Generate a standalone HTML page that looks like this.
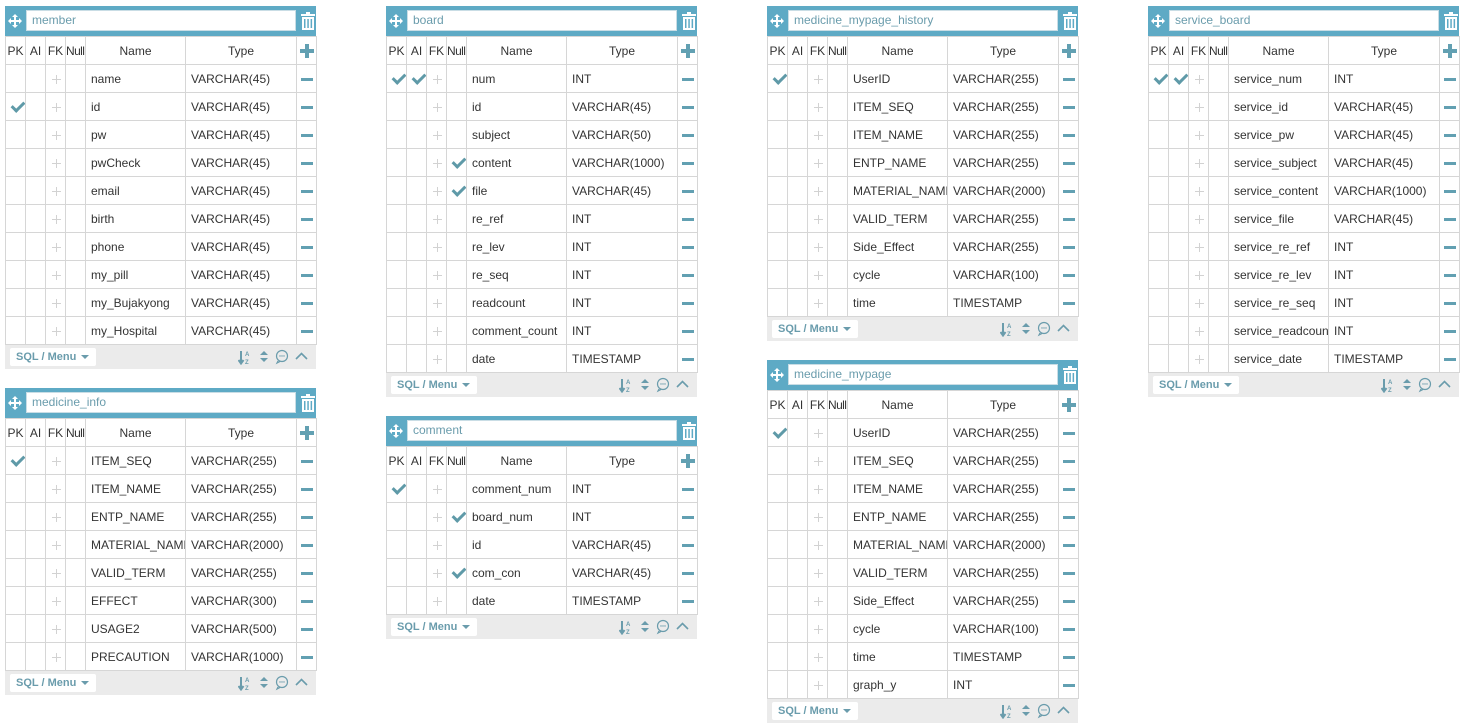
<!DOCTYPE html>
<html><head><meta charset="utf-8"><style>
*{box-sizing:border-box}
body{margin:0;width:1467px;height:727px;background:#fff;font-family:"Liberation Sans",sans-serif;font-size:12px;color:#333;position:relative;overflow:hidden}
.card{position:absolute;width:311px}
.hd{height:30px;background:#5eaac5;position:relative}
.hd .mvw{position:absolute;left:3px;top:8px;width:14px;height:14px}
.hd .nm{position:absolute;left:21px;top:4px;width:270px;height:21px;background:#fff;border:1px solid #c9dde5;color:#6a9cac;font-size:12px;line-height:19px;padding-left:5px}
.hd .tr{position:absolute;right:1px;top:6px;width:14px;height:18px}
table{border-collapse:collapse;table-layout:fixed;width:311px}
td{border:1px solid #d6d6d6;height:28px;padding:0;position:relative;white-space:nowrap;overflow:hidden}
tr.h td{text-align:center;font-size:12px;color:#333}
tr.h td.s{text-align:left;padding-left:0;letter-spacing:-0.6px;overflow:visible}
td.n,td.t{padding-left:5px}
td.f::before,td.f::after{content:"";position:absolute;background:#d2d2d2;left:50%;top:50%}
td.f::before{width:9px;height:1px;margin-left:-4px;margin-top:0}
td.f::after{width:1px;height:9px;margin-left:0;margin-top:-4px}
td.c::before{content:"";position:absolute;width:5px;height:10px;border-right:3px solid #5f9aa8;border-bottom:3px solid #5f9aa8;transform:rotate(45deg);left:8px;top:6px}
td.m::before{content:"";position:absolute;left:4px;top:13px;width:12px;height:3px;background:#62a0b2}
td.p::before,td.p::after{content:"";position:absolute;background:#62a0b2}
td.p::before{left:3px;top:12px;width:14px;height:4px}
td.p::after{left:8px;top:7px;width:4px;height:14px}
.ft{height:24px;background:#ebebeb;position:relative}
.ft .b{position:absolute;left:5px;top:3px;width:86px;height:18px;background:#fff;border-radius:2px;color:#6a9cac;font-weight:bold;font-size:11px;line-height:18px;padding-left:6px}
.ft .b::after{content:"";position:absolute;left:71px;top:7px;border:4px solid transparent;border-top:4px solid #6a9cac}
.ft svg{position:absolute;right:6px;top:4px}
</style></head><body>

<svg width="0" height="0" style="position:absolute">
<defs>
<g id="mv"><path d="M7 0L10 3H8V6H11V4L14 7L11 10V8H8V11H10L7 14L4 11H6V8H3V10L0 7L3 4V6H6V3H4Z" fill="#fff"/></g>
<g id="tr"><rect x="0" y="2" width="14" height="2" fill="#fff"/><rect x="5" y="0" width="4" height="2" fill="#fff"/><rect x="1" y="5" width="12" height="13" fill="#fff"/><rect x="3" y="7" width="1.5" height="9" fill="#5eaac5"/><rect x="6.3" y="7" width="1.5" height="9" fill="#5eaac5"/><rect x="9.6" y="7" width="1.5" height="9" fill="#5eaac5"/></g>
<g id="fi" fill="none" stroke="#6a9cac">
<path d="M3 2V14M0.5 11L3 14.5L5.5 11" stroke-width="2"/><text x="7" y="7" font-size="6" fill="#6a9cac" stroke="none" font-family="Liberation Sans" font-weight="bold">A</text><text x="7" y="15" font-size="6" fill="#6a9cac" stroke="none" font-family="Liberation Sans" font-weight="bold">Z</text>
<path d="M22 6L26 2L30 6ZM22 9L26 13L30 9Z" fill="#6a9cac" stroke="none"/>
<circle cx="44" cy="7" r="5.5" stroke-width="1.2"/><path d="M40 12L39 14L42 12.5" stroke-width="1.2"/><circle cx="42" cy="7" r=".7" fill="#6a9cac" stroke="none"/><circle cx="44" cy="7" r=".7" fill="#6a9cac" stroke="none"/><circle cx="46" cy="7" r=".7" fill="#6a9cac" stroke="none"/>
<path d="M58 10L63.5 4.5L69 10" stroke-width="1.6"/>
</g>
</defs></svg>

<!-- member -->
<div class="card" style="left:5px;top:6px">
<div class="hd"><svg class="mvw" viewBox="0 0 14 14"><use href="#mv"/></svg><div class="nm">member</div><svg class="tr" viewBox="0 0 14 18"><use href="#tr"/></svg></div>
<table><colgroup><col style="width:20px"><col style="width:20px"><col style="width:20px"><col style="width:20px"><col style="width:100px"><col style="width:111px"><col style="width:20px"></colgroup>
<tr class="h"><td>PK</td><td>AI</td><td>FK</td><td class="s">Null</td><td>Name</td><td>Type</td><td class="p"></td></tr>
<tr><td></td><td></td><td class="f"></td><td></td><td class="n">name</td><td class="t">VARCHAR(45)</td><td class="m"></td></tr>
<tr><td class="c"></td><td></td><td class="f"></td><td></td><td class="n">id</td><td class="t">VARCHAR(45)</td><td class="m"></td></tr>
<tr><td></td><td></td><td class="f"></td><td></td><td class="n">pw</td><td class="t">VARCHAR(45)</td><td class="m"></td></tr>
<tr><td></td><td></td><td class="f"></td><td></td><td class="n">pwCheck</td><td class="t">VARCHAR(45)</td><td class="m"></td></tr>
<tr><td></td><td></td><td class="f"></td><td></td><td class="n">email</td><td class="t">VARCHAR(45)</td><td class="m"></td></tr>
<tr><td></td><td></td><td class="f"></td><td></td><td class="n">birth</td><td class="t">VARCHAR(45)</td><td class="m"></td></tr>
<tr><td></td><td></td><td class="f"></td><td></td><td class="n">phone</td><td class="t">VARCHAR(45)</td><td class="m"></td></tr>
<tr><td></td><td></td><td class="f"></td><td></td><td class="n">my_pill</td><td class="t">VARCHAR(45)</td><td class="m"></td></tr>
<tr><td></td><td></td><td class="f"></td><td></td><td class="n">my_Bujakyong</td><td class="t">VARCHAR(45)</td><td class="m"></td></tr>
<tr><td></td><td></td><td class="f"></td><td></td><td class="n">my_Hospital</td><td class="t">VARCHAR(45)</td><td class="m"></td></tr>
</table>
<div class="ft"><div class="b">SQL / Menu</div><svg width="72" height="16"><use href="#fi"/></svg></div>
</div>

<!-- medicine_info -->
<div class="card" style="left:5px;top:388px">
<div class="hd"><svg class="mvw" viewBox="0 0 14 14"><use href="#mv"/></svg><div class="nm">medicine_info</div><svg class="tr" viewBox="0 0 14 18"><use href="#tr"/></svg></div>
<table><colgroup><col style="width:20px"><col style="width:20px"><col style="width:20px"><col style="width:20px"><col style="width:100px"><col style="width:111px"><col style="width:20px"></colgroup>
<tr class="h"><td>PK</td><td>AI</td><td>FK</td><td class="s">Null</td><td>Name</td><td>Type</td><td class="p"></td></tr>
<tr><td class="c"></td><td></td><td class="f"></td><td></td><td class="n">ITEM_SEQ</td><td class="t">VARCHAR(255)</td><td class="m"></td></tr>
<tr><td></td><td></td><td class="f"></td><td></td><td class="n">ITEM_NAME</td><td class="t">VARCHAR(255)</td><td class="m"></td></tr>
<tr><td></td><td></td><td class="f"></td><td></td><td class="n">ENTP_NAME</td><td class="t">VARCHAR(255)</td><td class="m"></td></tr>
<tr><td></td><td></td><td class="f"></td><td></td><td class="n">MATERIAL_NAME</td><td class="t">VARCHAR(2000)</td><td class="m"></td></tr>
<tr><td></td><td></td><td class="f"></td><td></td><td class="n">VALID_TERM</td><td class="t">VARCHAR(255)</td><td class="m"></td></tr>
<tr><td></td><td></td><td class="f"></td><td></td><td class="n">EFFECT</td><td class="t">VARCHAR(300)</td><td class="m"></td></tr>
<tr><td></td><td></td><td class="f"></td><td></td><td class="n">USAGE2</td><td class="t">VARCHAR(500)</td><td class="m"></td></tr>
<tr><td></td><td></td><td class="f"></td><td></td><td class="n">PRECAUTION</td><td class="t">VARCHAR(1000)</td><td class="m"></td></tr>
</table>
<div class="ft"><div class="b">SQL / Menu</div><svg width="72" height="16"><use href="#fi"/></svg></div>
</div>

<!-- board -->
<div class="card" style="left:386px;top:6px">
<div class="hd"><svg class="mvw" viewBox="0 0 14 14"><use href="#mv"/></svg><div class="nm">board</div><svg class="tr" viewBox="0 0 14 18"><use href="#tr"/></svg></div>
<table><colgroup><col style="width:20px"><col style="width:20px"><col style="width:20px"><col style="width:20px"><col style="width:100px"><col style="width:111px"><col style="width:20px"></colgroup>
<tr class="h"><td>PK</td><td>AI</td><td>FK</td><td class="s">Null</td><td>Name</td><td>Type</td><td class="p"></td></tr>
<tr><td class="c"></td><td class="c"></td><td class="f"></td><td></td><td class="n">num</td><td class="t">INT</td><td class="m"></td></tr>
<tr><td></td><td></td><td class="f"></td><td></td><td class="n">id</td><td class="t">VARCHAR(45)</td><td class="m"></td></tr>
<tr><td></td><td></td><td class="f"></td><td></td><td class="n">subject</td><td class="t">VARCHAR(50)</td><td class="m"></td></tr>
<tr><td></td><td></td><td class="f"></td><td class="c"></td><td class="n">content</td><td class="t">VARCHAR(1000)</td><td class="m"></td></tr>
<tr><td></td><td></td><td class="f"></td><td class="c"></td><td class="n">file</td><td class="t">VARCHAR(45)</td><td class="m"></td></tr>
<tr><td></td><td></td><td class="f"></td><td></td><td class="n">re_ref</td><td class="t">INT</td><td class="m"></td></tr>
<tr><td></td><td></td><td class="f"></td><td></td><td class="n">re_lev</td><td class="t">INT</td><td class="m"></td></tr>
<tr><td></td><td></td><td class="f"></td><td></td><td class="n">re_seq</td><td class="t">INT</td><td class="m"></td></tr>
<tr><td></td><td></td><td class="f"></td><td></td><td class="n">readcount</td><td class="t">INT</td><td class="m"></td></tr>
<tr><td></td><td></td><td class="f"></td><td></td><td class="n">comment_count</td><td class="t">INT</td><td class="m"></td></tr>
<tr><td></td><td></td><td class="f"></td><td></td><td class="n">date</td><td class="t">TIMESTAMP</td><td class="m"></td></tr>
</table>
<div class="ft"><div class="b">SQL / Menu</div><svg width="72" height="16"><use href="#fi"/></svg></div>
</div>

<!-- comment -->
<div class="card" style="left:386px;top:416px">
<div class="hd"><svg class="mvw" viewBox="0 0 14 14"><use href="#mv"/></svg><div class="nm">comment</div><svg class="tr" viewBox="0 0 14 18"><use href="#tr"/></svg></div>
<table><colgroup><col style="width:20px"><col style="width:20px"><col style="width:20px"><col style="width:20px"><col style="width:100px"><col style="width:111px"><col style="width:20px"></colgroup>
<tr class="h"><td>PK</td><td>AI</td><td>FK</td><td class="s">Null</td><td>Name</td><td>Type</td><td class="p"></td></tr>
<tr><td class="c"></td><td></td><td class="f"></td><td></td><td class="n">comment_num</td><td class="t">INT</td><td class="m"></td></tr>
<tr><td></td><td></td><td class="f"></td><td class="c"></td><td class="n">board_num</td><td class="t">INT</td><td class="m"></td></tr>
<tr><td></td><td></td><td class="f"></td><td></td><td class="n">id</td><td class="t">VARCHAR(45)</td><td class="m"></td></tr>
<tr><td></td><td></td><td class="f"></td><td class="c"></td><td class="n">com_con</td><td class="t">VARCHAR(45)</td><td class="m"></td></tr>
<tr><td></td><td></td><td class="f"></td><td></td><td class="n">date</td><td class="t">TIMESTAMP</td><td class="m"></td></tr>
</table>
<div class="ft"><div class="b">SQL / Menu</div><svg width="72" height="16"><use href="#fi"/></svg></div>
</div>

<!-- medicine_mypage_history -->
<div class="card" style="left:767px;top:6px">
<div class="hd"><svg class="mvw" viewBox="0 0 14 14"><use href="#mv"/></svg><div class="nm">medicine_mypage_history</div><svg class="tr" viewBox="0 0 14 18"><use href="#tr"/></svg></div>
<table><colgroup><col style="width:20px"><col style="width:20px"><col style="width:20px"><col style="width:20px"><col style="width:100px"><col style="width:111px"><col style="width:20px"></colgroup>
<tr class="h"><td>PK</td><td>AI</td><td>FK</td><td class="s">Null</td><td>Name</td><td>Type</td><td class="p"></td></tr>
<tr><td class="c"></td><td></td><td class="f"></td><td></td><td class="n">UserID</td><td class="t">VARCHAR(255)</td><td class="m"></td></tr>
<tr><td></td><td></td><td class="f"></td><td></td><td class="n">ITEM_SEQ</td><td class="t">VARCHAR(255)</td><td class="m"></td></tr>
<tr><td></td><td></td><td class="f"></td><td></td><td class="n">ITEM_NAME</td><td class="t">VARCHAR(255)</td><td class="m"></td></tr>
<tr><td></td><td></td><td class="f"></td><td></td><td class="n">ENTP_NAME</td><td class="t">VARCHAR(255)</td><td class="m"></td></tr>
<tr><td></td><td></td><td class="f"></td><td></td><td class="n">MATERIAL_NAME</td><td class="t">VARCHAR(2000)</td><td class="m"></td></tr>
<tr><td></td><td></td><td class="f"></td><td></td><td class="n">VALID_TERM</td><td class="t">VARCHAR(255)</td><td class="m"></td></tr>
<tr><td></td><td></td><td class="f"></td><td></td><td class="n">Side_Effect</td><td class="t">VARCHAR(255)</td><td class="m"></td></tr>
<tr><td></td><td></td><td class="f"></td><td></td><td class="n">cycle</td><td class="t">VARCHAR(100)</td><td class="m"></td></tr>
<tr><td></td><td></td><td class="f"></td><td></td><td class="n">time</td><td class="t">TIMESTAMP</td><td class="m"></td></tr>
</table>
<div class="ft"><div class="b">SQL / Menu</div><svg width="72" height="16"><use href="#fi"/></svg></div>
</div>

<!-- medicine_mypage -->
<div class="card" style="left:767px;top:360px">
<div class="hd"><svg class="mvw" viewBox="0 0 14 14"><use href="#mv"/></svg><div class="nm">medicine_mypage</div><svg class="tr" viewBox="0 0 14 18"><use href="#tr"/></svg></div>
<table><colgroup><col style="width:20px"><col style="width:20px"><col style="width:20px"><col style="width:20px"><col style="width:100px"><col style="width:111px"><col style="width:20px"></colgroup>
<tr class="h"><td>PK</td><td>AI</td><td>FK</td><td class="s">Null</td><td>Name</td><td>Type</td><td class="p"></td></tr>
<tr><td class="c"></td><td></td><td class="f"></td><td></td><td class="n">UserID</td><td class="t">VARCHAR(255)</td><td class="m"></td></tr>
<tr><td></td><td></td><td class="f"></td><td></td><td class="n">ITEM_SEQ</td><td class="t">VARCHAR(255)</td><td class="m"></td></tr>
<tr><td></td><td></td><td class="f"></td><td></td><td class="n">ITEM_NAME</td><td class="t">VARCHAR(255)</td><td class="m"></td></tr>
<tr><td></td><td></td><td class="f"></td><td></td><td class="n">ENTP_NAME</td><td class="t">VARCHAR(255)</td><td class="m"></td></tr>
<tr><td></td><td></td><td class="f"></td><td></td><td class="n">MATERIAL_NAME</td><td class="t">VARCHAR(2000)</td><td class="m"></td></tr>
<tr><td></td><td></td><td class="f"></td><td></td><td class="n">VALID_TERM</td><td class="t">VARCHAR(255)</td><td class="m"></td></tr>
<tr><td></td><td></td><td class="f"></td><td></td><td class="n">Side_Effect</td><td class="t">VARCHAR(255)</td><td class="m"></td></tr>
<tr><td></td><td></td><td class="f"></td><td></td><td class="n">cycle</td><td class="t">VARCHAR(100)</td><td class="m"></td></tr>
<tr><td></td><td></td><td class="f"></td><td></td><td class="n">time</td><td class="t">TIMESTAMP</td><td class="m"></td></tr>
<tr><td></td><td></td><td class="f"></td><td></td><td class="n">graph_y</td><td class="t">INT</td><td class="m"></td></tr>
</table>
<div class="ft"><div class="b">SQL / Menu</div><svg width="72" height="16"><use href="#fi"/></svg></div>
</div>

<!-- service_board -->
<div class="card" style="left:1148px;top:6px">
<div class="hd"><svg class="mvw" viewBox="0 0 14 14"><use href="#mv"/></svg><div class="nm">service_board</div><svg class="tr" viewBox="0 0 14 18"><use href="#tr"/></svg></div>
<table><colgroup><col style="width:20px"><col style="width:20px"><col style="width:20px"><col style="width:20px"><col style="width:100px"><col style="width:111px"><col style="width:20px"></colgroup>
<tr class="h"><td>PK</td><td>AI</td><td>FK</td><td class="s">Null</td><td>Name</td><td>Type</td><td class="p"></td></tr>
<tr><td class="c"></td><td class="c"></td><td class="f"></td><td></td><td class="n">service_num</td><td class="t">INT</td><td class="m"></td></tr>
<tr><td></td><td></td><td class="f"></td><td></td><td class="n">service_id</td><td class="t">VARCHAR(45)</td><td class="m"></td></tr>
<tr><td></td><td></td><td class="f"></td><td></td><td class="n">service_pw</td><td class="t">VARCHAR(45)</td><td class="m"></td></tr>
<tr><td></td><td></td><td class="f"></td><td></td><td class="n">service_subject</td><td class="t">VARCHAR(45)</td><td class="m"></td></tr>
<tr><td></td><td></td><td class="f"></td><td></td><td class="n">service_content</td><td class="t">VARCHAR(1000)</td><td class="m"></td></tr>
<tr><td></td><td></td><td class="f"></td><td></td><td class="n">service_file</td><td class="t">VARCHAR(45)</td><td class="m"></td></tr>
<tr><td></td><td></td><td class="f"></td><td></td><td class="n">service_re_ref</td><td class="t">INT</td><td class="m"></td></tr>
<tr><td></td><td></td><td class="f"></td><td></td><td class="n">service_re_lev</td><td class="t">INT</td><td class="m"></td></tr>
<tr><td></td><td></td><td class="f"></td><td></td><td class="n">service_re_seq</td><td class="t">INT</td><td class="m"></td></tr>
<tr><td></td><td></td><td class="f"></td><td></td><td class="n">service_readcount</td><td class="t">INT</td><td class="m"></td></tr>
<tr><td></td><td></td><td class="f"></td><td></td><td class="n">service_date</td><td class="t">TIMESTAMP</td><td class="m"></td></tr>
</table>
<div class="ft"><div class="b">SQL / Menu</div><svg width="72" height="16"><use href="#fi"/></svg></div>
</div>

</body></html>
